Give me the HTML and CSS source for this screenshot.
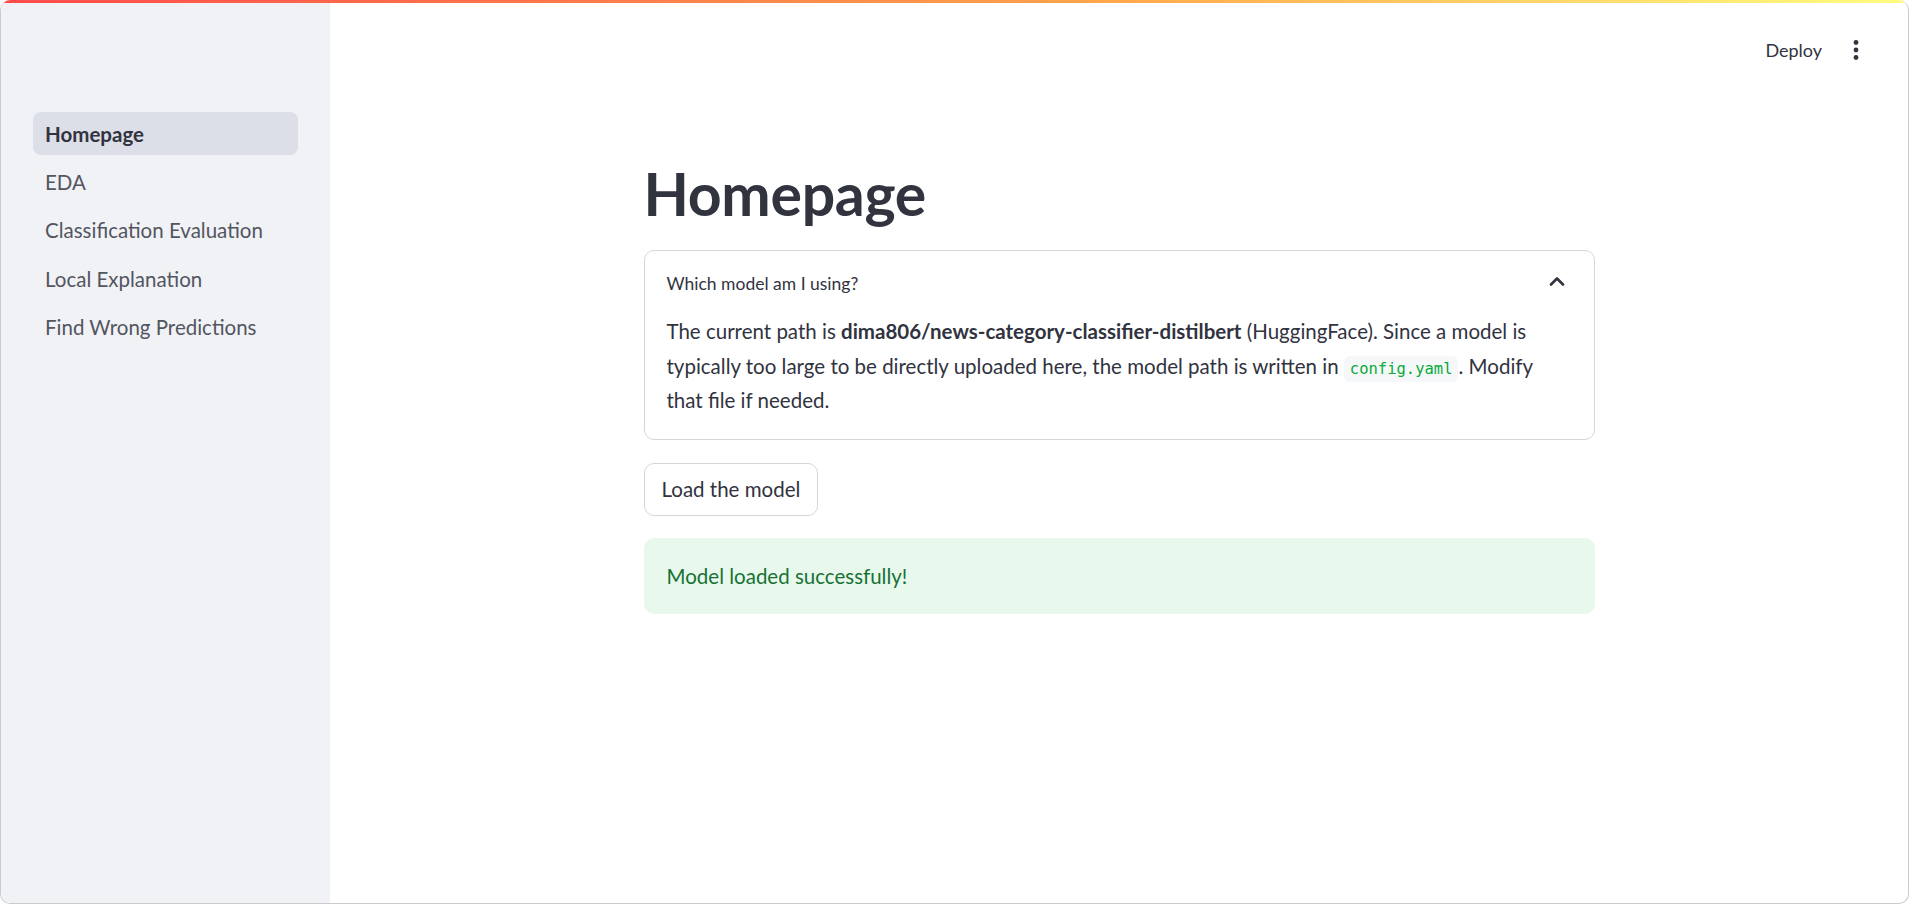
FILE: index.html
```html
<!DOCTYPE html>
<html lang="en">
<head>
<meta charset="utf-8">
<title>Homepage</title>
<link rel="stylesheet" href="styles.css">
</head>
<body>
<div class="window">
  <div class="decoration"></div>
  <div class="app">
    <aside class="sidebar">
      <nav class="nav">
        <a class="nav-item active">Homepage</a>
        <a class="nav-item">EDA</a>
        <a class="nav-item">Classification Evaluation</a>
        <a class="nav-item">Local Explanation</a>
        <a class="nav-item">Find Wrong Predictions</a>
      </nav>
    </aside>
    <main class="main">
      <header class="toolbar">
        <span class="deploy">Deploy</span>
        <span class="kebab" aria-label="menu">
          <svg width="8" height="22" viewBox="0 0 8 22"><circle cx="4" cy="3.5" r="2.4" fill="#31333f"/><circle cx="4" cy="11" r="2.4" fill="#31333f"/><circle cx="4" cy="18.5" r="2.4" fill="#31333f"/></svg>
        </span>
      </header>
      <div class="content">
        <h1 class="title">Homepage</h1>
        <section class="expander">
          <div class="exp-head">
            <span class="exp-title">Which model am I using?</span>
            <svg class="chevron" width="16" height="10" viewBox="0 0 16 10"><path d="M2 8.5 L8 2.5 L14 8.5" fill="none" stroke="#31333f" stroke-width="2.6" stroke-linecap="round" stroke-linejoin="round"/></svg>
          </div>
          <div class="exp-body">
            <p>The current path is <strong>dima806/news-category-classifier-distilbert</strong> (HuggingFace). Since a model is typically too large to be directly uploaded here, the model path is written in <code>config.yaml</code>. Modify that file if needed.</p>
          </div>
        </section>
        <button class="btn">Load the model</button>
        <div class="alert">Model loaded successfully!</div>
      </div>
    </main>
  </div>
</div>
</body>
</html>
```

FILE: styles.css
```css
* { box-sizing: border-box; }
html, body { margin: 0; padding: 0; background: #ffffff; }
body {
  font-family: "Lato", "Noto Sans", sans-serif;
  color: #31333f;
  width: 1909px;
  height: 904px;
  overflow: hidden;
}
.window {
  width: 1909px;
  height: 904px;
  border: 1px solid #cbcbcb;
  border-top: none;
  border-radius: 10px;
  overflow: hidden;
  display: flex;
  flex-direction: column;
  background: #ffffff;
}
.decoration {
  height: 3px;
  flex: none;
  background: linear-gradient(90deg, #ff4b4b 0%, #ffa04b 55%, #fffd80 100%);
}
.app {
  flex: 1;
  display: flex;
  min-height: 0;
}
.sidebar {
  width: 329px;
  flex: none;
  background: #f0f2f6;
  padding: 109px 32px 0 32px;
}
.nav {
  display: flex;
  flex-direction: column;
  gap: 5.4px;
}
.nav-item {
  display: flex;
  align-items: center;
  height: 43px;
  padding-left: 12px;
  border-radius: 8px;
  font-size: 20.5px;
  color: #53555f;
}
.nav-item.active {
  background: #dcdfe8;
  color: #31333f;
  font-weight: 700;
}
.main {
  flex: 1;
  display: flex;
  flex-direction: column;
}
.toolbar {
  display: flex;
  justify-content: flex-end;
  align-items: center;
  gap: 30px;
  height: 94px;
  padding: 0 48px 0 0;
  flex: none;
}
.deploy {
  font-size: 18px;
  color: #31333f;
}
.kebab { display: flex; align-items: center; }
.content {
  width: 951px;
  margin: 62px auto 0 auto;
  display: flex;
  flex-direction: column;
  align-items: flex-start;
}
.title {
  margin: 0;
  font-size: 59px;
  line-height: 70px;
  font-weight: 700;
  color: #31333f;
  letter-spacing: -0.3px;
}
.expander {
  margin-top: 21px;
  width: 100%;
  border: 1px solid #d6d7da;
  border-radius: 10px;
}
.exp-head {
  height: 63px;
  display: flex;
  align-items: center;
  justify-content: space-between;
  padding: 2px 29px 0 22px;
}
.exp-title {
  font-size: 17.5px;
}
.chevron { margin-top: -6px; }
.exp-body {
  padding: 0 22px 21.5px 22px;
}
.exp-body p {
  margin: 0;
  font-size: 20.5px;
  line-height: 34.5px;
}
.exp-body strong { font-weight: 700; }
code {
  font-family: "DejaVu Sans Mono", "Liberation Mono", monospace;
  font-size: 15.5px;
  line-height: 1;
  color: #09ab3b;
  background: #f5f7f9;
  border-radius: 6px;
  padding: 4px 6px;
}
.btn {
  margin-top: 22.5px;
  height: 53px;
  padding: 0 17px;
  border: 1px solid #d6d7da;
  border-radius: 10px;
  background: #ffffff;
  font-family: inherit;
  font-size: 20.5px;
  color: #31333f;
}
.alert {
  margin-top: 22px;
  width: 100%;
  height: 76px;
  border-radius: 10px;
  background: #e8f8ed;
  color: #177233;
  display: flex;
  align-items: center;
  padding: 0 23px;
  font-size: 20.5px;
}
```
